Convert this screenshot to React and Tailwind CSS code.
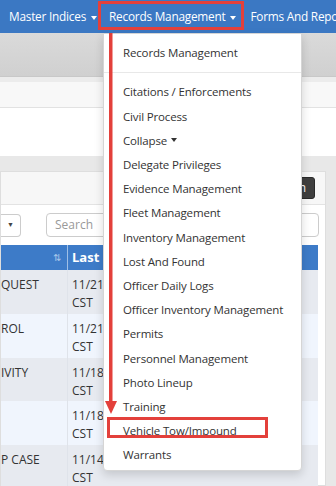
import React from 'react';

const menuItems = [
  'Citations / Enforcements',
  'Civil Process',
  'Collapse',
  'Delegate Privileges',
  'Evidence Management',
  'Fleet Management',
  'Inventory Management',
  'Lost And Found',
  'Officer Daily Logs',
  'Officer Inventory Management',
  'Permits',
  'Personnel Management',
  'Photo Lineup',
  'Training',
  'Vehicle Tow/Impound',
  'Warrants'
];

const rows = [
  { name: 'QUEST', date: '11/21,' },
  { name: 'ROL', date: '11/21,' },
  { name: 'IVITY', date: '11/18,' },
  { name: '', date: '11/18,' },
  { name: 'P CASE', date: '11/14,' }
];

const Caret = () => (
  <span className="inline-block ml-[5px] align-middle border-x-[3.5px] border-x-transparent border-t-[4px] border-t-white"></span>
);

const App = () => {
  return (
    <div className="relative w-[336px] h-[486px] overflow-hidden bg-white text-[#333] font-['Open_Sans',sans-serif]">
      {/* Top navigation */}
      <nav className="h-[33px] bg-[#3b78c3] flex items-center text-white text-[11.8px] tracking-[-0.22px] whitespace-nowrap">
        <span className="ml-[9px]">Master Indices<Caret /></span>
        <span className="ml-[12px]">Records Management<Caret /></span>
        <span className="ml-[14px]">Forms And Reports</span>
      </nav>

      {/* Title bar */}
      <div className="h-[44px] bg-gradient-to-b from-[#dadada] to-[#d0d0d0] border-b border-[#c8c8c8]"></div>
      <div className="h-[5px] bg-[#ececec]"></div>
      <div className="h-[26px] bg-[#f8f8f8] border-b border-[#e2e2e2]"></div>
      <div className="h-[48px] bg-white"></div>

      {/* Page body */}
      <div className="bg-[#e8e8e8] pt-[15px] pr-[10px] h-[330px]">
        <div className="bg-white border border-[#dedede] h-full">
          <div className="h-[33px] bg-[#f7f7f7] border-b border-[#e3e3e3] flex items-center justify-end pr-[10px]">
            <button className="h-[22px] px-[8px] bg-[#3f3f3f] text-white text-[12px] rounded-[3px] border border-[#2a2a2a]">Login</button>
          </div>
          <div className="flex items-center h-[40px] pr-[6px]">
            <div className="w-[20px] h-[23px] border border-[#ccc] border-l-0 rounded-r-[4px] flex items-center justify-center text-[7px] text-[#444]">▼</div>
            <div className="ml-[25px] flex-1 h-[24px] border border-[#ccc] rounded-[4px] flex items-center pl-[8px] text-[12px] text-[#999]">Search</div>
          </div>
          <div className="pr-[7px]">
            <div className="flex h-[25px] bg-[#3d7bc8] text-white text-[13px] font-bold">
              <div className="w-[67px] flex items-center justify-end pr-[6px] border-r border-[#9fbfe6]">
                <span className="text-[10px] text-[#a8c6ea] font-normal">⇅</span>
              </div>
              <div className="flex-1 flex items-center pl-[4px]">Last Modified</div>
            </div>
            {rows.map((row, i) => (
              <div key={i} className={`flex h-[43.75px] text-[12px] ${i % 2 === 0 ? 'bg-[#e7eaf0]' : 'bg-[#f0f5fd]'}`}>
                <div className="w-[67px] pt-[6px] border-r border-[#dfe3ea]">{row.name}</div>
                <div className="flex-1 pl-[4px] pt-[6px] leading-[18px]">
                  <div>{row.date}</div>
                  <div>CST</div>
                </div>
              </div>
            ))}
          </div>
        </div>
      </div>

      {/* Dropdown menu */}
      <div className="absolute left-[103px] top-[33px] w-[199px] h-[438px] bg-white border border-[#d5d5d5] rounded-b-[4px] shadow-[0_4px_10px_rgba(0,0,0,0.15)] pt-[7px] text-[11.5px] tracking-[-0.15px] text-[#333]">
        <div className="h-[24px] flex items-center pl-[19px]">Records Management</div>
        <div className="h-[15px] flex items-center">
          <div className="w-full border-t border-[#e8e8e8]"></div>
        </div>
        {menuItems.map(item => (
          <div key={item} className="h-[24.2px] flex items-center pl-[19px] whitespace-nowrap">
            {item}
            {item === 'Collapse' && (
              <span className="inline-block ml-[4px] border-x-[3.5px] border-x-transparent border-t-[4px] border-t-[#333]"></span>
            )}
          </div>
        ))}
      </div>

      {/* Annotations */}
      <div className="absolute left-[98px] top-[1px] w-[146px] h-[29px] border-[3px] border-[#e3403b]"></div>
      <div className="absolute left-[107px] top-[417px] w-[161px] h-[21px] border-[3px] border-[#e3403b]"></div>
      <svg className="absolute left-[104px] top-[33px]" width="16" height="384" viewBox="0 0 16 384">
        <rect x="5" y="0" width="3.5" height="372" fill="#e3403b" />
        <polygon points="1,368 13,368 7,381" fill="#e3403b" />
      </svg>
    </div>
  );
};

export default App;
